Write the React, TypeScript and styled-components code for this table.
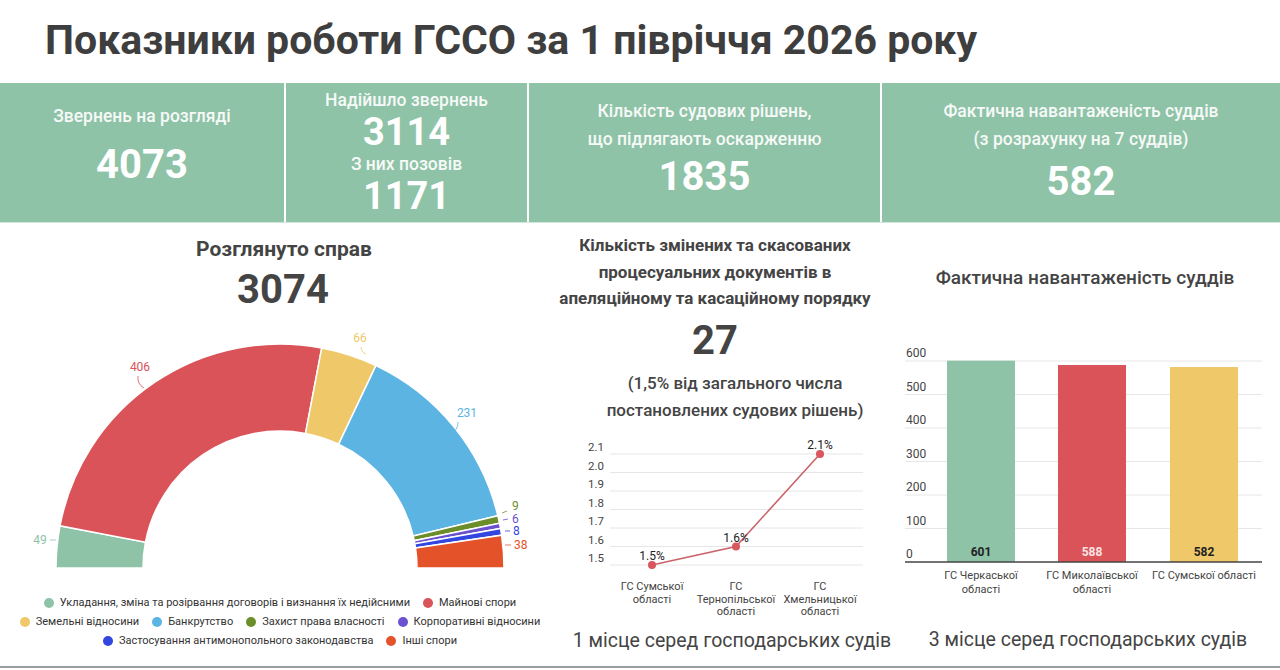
import React from 'react';
import styled, { createGlobalStyle } from 'styled-components';

const GlobalStyle = createGlobalStyle`
  html, body {
    margin: 0;
    padding: 0;
    background: #fff;
  }
  body {
    font-family: Roboto, 'Noto Sans', 'Liberation Sans', sans-serif;
    color: #444;
  }
`;

const Page = styled.div`
  width: 1280px;
  height: 670px;
  overflow: hidden;
  display: flex;
  flex-direction: column;
  background: #fff;
  box-sizing: border-box;
  padding-bottom: 2px;
`;

const Header = styled.header`
  height: 83px;
  display: flex;
  align-items: center;
  padding: 0 0 4px 45px;
  box-sizing: border-box;
`;

const Title = styled.h1`
  margin: 0;
  font-size: 41px;
  font-weight: 700;
  color: #3e3e3e;
  white-space: nowrap;
`;

const StatBand = styled.section`
  display: grid;
  grid-template-columns: 284px 241px 351px 1fr;
  column-gap: 2px;
  height: 140px;
  border-bottom: 1px solid #d3e6db;
  box-sizing: border-box;
`;

const StatCell = styled.div<{ $pt: number; $gap: number }>`
  background: #8ec3a7;
  display: flex;
  flex-direction: column;
  align-items: center;
  padding-top: ${({ $pt }) => $pt}px;
  gap: ${({ $gap }) => $gap}px;
  box-sizing: border-box;
`;

const StatLabel = styled.div<{ $lh?: number }>`
  font-size: 17.5px;
  font-weight: 500;
  line-height: ${({ $lh }) => $lh ?? 22}px;
  text-align: center;
  color: #f6f9f7;
  white-space: nowrap;
`;

const StatValue = styled.div<{ $size?: number }>`
  font-size: ${({ $size }) => $size ?? 40}px;
  font-weight: 700;
  line-height: 38px;
  color: #fff;
`;

const Panels = styled.section`
  flex: 1;
  display: grid;
  grid-template-columns: 540px 350px 390px;
  border-bottom: 2px solid #9c9c9c;
`;

const Panel = styled.div<{ $pt: number }>`
  display: flex;
  flex-direction: column;
  align-items: center;
  padding-top: ${({ $pt }) => $pt}px;
  box-sizing: border-box;
`;

const PanelTitle = styled.div<{ $size?: number; $weight?: number; $lh?: number; $shift?: number }>`
  padding-left: ${({ $shift }) => $shift ?? 0}px;
  font-size: ${({ $size }) => $size ?? 17}px;
  font-weight: ${({ $weight }) => $weight ?? 700};
  line-height: ${({ $lh }) => $lh ?? 24}px;
  text-align: center;
  color: #444;
  white-space: nowrap;
`;

const BigNumber = styled.div<{ $mt: number; $shift?: number }>`
  margin-top: ${({ $mt }) => $mt}px;
  padding-left: ${({ $shift }) => $shift ?? 0}px;
  font-size: 40px;
  font-weight: 700;
  line-height: 44px;
  color: #444;
`;

const Note = styled.div`
  margin-top: 7px;
  padding-left: 40px;
  font-size: 17px;
  font-weight: 500;
  line-height: 27px;
  text-align: center;
  color: #444;
  white-space: nowrap;
`;

const ChartBox = styled.svg<{ $mt: number }>`
  display: block;
  margin-top: ${({ $mt }) => $mt}px;
  font-family: Roboto, 'Noto Sans', sans-serif;
`;

const Rank = styled.div<{ $mt: number; $shift: number }>`
  margin-top: ${({ $mt }) => $mt}px;
  padding-left: ${({ $shift }) => $shift}px;
  font-size: 19.5px;
  line-height: 26px;
  color: #444;
  white-space: nowrap;
`;

const Legend = styled.div`
  display: flex;
  flex-direction: column;
  align-items: center;
  margin-top: 3px;
  padding-left: 20px;
`;

const LegendRow = styled.div`
  display: flex;
  align-items: center;
  gap: 13px;
  height: 19px;
`;

const LegendItem = styled.span`
  display: flex;
  align-items: center;
  gap: 6px;
  font-size: 11px;
  color: #333;
  white-space: nowrap;
`;

const Dot = styled.i<{ $color: string }>`
  width: 10px;
  height: 10px;
  border-radius: 50%;
  background: ${({ $color }) => $color};
`;

const C = {
  green: '#8ec3a7',
  red: '#da5359',
  yellow: '#eec869',
  blue: '#5cb4e2',
  olive: '#6b8e2b',
  purple: '#6a51d0',
  royal: '#3346e0',
  orange: '#e4522a',
};

const slices = [
  { v: 49, c: C.green },
  { v: 406, c: C.red },
  { v: 66, c: C.yellow },
  { v: 231, c: C.blue },
  { v: 9, c: C.olive },
  { v: 6, c: C.purple },
  { v: 8, c: C.royal },
  { v: 38, c: C.orange },
];

const legendRows = [
  [
    { t: 'Укладання, зміна та розірвання договорів і визнання їх недійсними', c: C.green },
    { t: 'Майнові спори', c: C.red },
  ],
  [
    { t: 'Земельні відносини', c: C.yellow },
    { t: 'Банкрутство', c: C.blue },
    { t: 'Захист права власності', c: C.olive },
    { t: 'Корпоративні відносини', c: C.purple },
  ],
  [
    { t: 'Застосування антимонопольного законодавства', c: C.royal },
    { t: 'Інші спори', c: C.orange },
  ],
];

const polar = (cx: number, cy: number, r: number, deg: number) => {
  const a = (deg * Math.PI) / 180;
  return [cx + r * Math.cos(a), cy - r * Math.sin(a)];
};

const HalfDonut = () => {
  const cx = 280;
  const cy = 256;
  const R = 224;
  const r = 137;
  const total = slices.reduce((s, x) => s + x.v, 0);
  let start = 180;

  const paths = slices.map((s, i) => {
    const end = start - (s.v / total) * 180;
    const [x1, y1] = polar(cx, cy, R, start);
    const [x2, y2] = polar(cx, cy, R, end);
    const [x3, y3] = polar(cx, cy, r, end);
    const [x4, y4] = polar(cx, cy, r, start);
    const d = `M${x1} ${y1} A${R} ${R} 0 0 1 ${x2} ${y2} L${x3} ${y3} A${r} ${r} 0 0 0 ${x4} ${y4} Z`;
    start = end;
    return <path key={i} d={d} fill={s.c} stroke="#fff" strokeWidth={1.5} />;
  });

  const labels = [
    { t: '49', x: 40, y: 232, c: C.green, line: 'M50 228 L56 228', a: 'middle' },
    { t: '406', x: 140, y: 59, c: C.red, line: 'M138 64 Q137 72 144 76', a: 'middle' },
    { t: '66', x: 360, y: 30, c: C.yellow, line: 'M361 35 Q361 40 366 42', a: 'middle' },
    { t: '231', x: 467, y: 105, c: C.blue, line: 'M458 110 Q458 118 451 122', a: 'middle' },
    { t: '9', x: 512, y: 198, c: C.olive, line: 'M502 201 L507 199', a: 'start' },
    { t: '6', x: 512, y: 211, c: C.purple, line: 'M503 208 L508 207', a: 'start' },
    { t: '8', x: 513, y: 223, c: C.royal, line: 'M505 219 L510 219', a: 'start' },
    { t: '38', x: 514, y: 237, c: C.orange, line: 'M505 233 L511 233', a: 'start' },
  ];

  return (
    <ChartBox $mt={0} width={540} height={278} viewBox="0 0 540 278">
      {paths}
      {labels.map((l) => (
        <g key={l.t}>
          <path d={l.line} stroke={l.c} strokeWidth={1} fill="none" opacity={0.8} />
          <text
            x={l.x}
            y={l.y}
            fontSize={12}
            fill={l.c}
            textAnchor={l.a as 'middle' | 'start'}
          >
            {l.t}
          </text>
        </g>
      ))}
    </ChartBox>
  );
};

const LineChart = () => {
  const ticks = [2.1, 2.0, 1.9, 1.8, 1.7, 1.6, 1.5];
  const yOf = (v: number) => 24 + ((2.1 - v) / 0.6) * 111;
  const pts = [
    { x: 112, v: 1.5, lbl: '1.5%', cat: ['ГС Сумської', 'області'] },
    { x: 196, v: 1.6, lbl: '1.6%', cat: ['ГС', 'Тернопільської', 'області'] },
    { x: 280, v: 2.1, lbl: '2.1%', cat: ['ГС', 'Хмельницької', 'області'] },
  ];
  return (
    <ChartBox $mt={6} width={350} height={190} viewBox="0 0 350 190">
      {ticks.map((t) => (
        <g key={t}>
          <line x1={70} x2={323} y1={yOf(t)} y2={yOf(t)} stroke="#e6e6e6" strokeWidth={1} />
          <text x={48} y={yOf(t) - 3} fontSize={11.5} fill="#444">
            {t.toFixed(1)}
          </text>
        </g>
      ))}
      <polyline
        points={pts.map((p) => `${p.x},${yOf(p.v)}`).join(' ')}
        fill="none"
        stroke="#c9646a"
        strokeWidth={1.6}
      />
      {pts.map((p) => (
        <g key={p.lbl}>
          <circle cx={p.x} cy={yOf(p.v)} r={4} fill="#d9575e" />
          <text x={p.x} y={yOf(p.v) - 5} fontSize={12} fill="#222" textAnchor="middle">
            {p.lbl}
          </text>
          {p.cat.map((c, i) => (
            <text key={c} x={p.x} y={160 + i * 12.5} fontSize={11} fill="#444" textAnchor="middle">
              {c}
            </text>
          ))}
        </g>
      ))}
    </ChartBox>
  );
};

const BarChart = () => {
  const ticks = [600, 500, 400, 300, 200, 100, 0];
  const yOf = (v: number) => 233 - (v / 600) * 201;
  const bars = [
    { x: 57, v: 601, c: C.green, tc: '#222', cat: ['ГС Черкаської', 'області'] },
    { x: 168, v: 588, c: C.red, tc: '#fbe3e4', cat: ['ГС Миколаївської', 'області'] },
    { x: 280, v: 582, c: C.yellow, tc: '#222', cat: ['ГС Сумської області'] },
  ];
  return (
    <ChartBox $mt={38} width={390} height={270} viewBox="0 0 390 270">
      {ticks.map((t) => (
        <g key={t}>
          {t !== 0 && <line x1={15} x2={372} y1={yOf(t)} y2={yOf(t)} stroke="#e6e6e6" strokeWidth={1} />}
          <text x={16} y={yOf(t) - 4} fontSize={12} fill="#444">
            {t}
          </text>
        </g>
      ))}
      {bars.map((b) => (
        <g key={b.v}>
          <rect x={b.x} y={yOf(b.v)} width={68} height={233 - yOf(b.v)} fill={b.c} />
          <text x={b.x + 34} y={227} fontSize={12} fontWeight={700} fill={b.tc} textAnchor="middle">
            {b.v}
          </text>
          {b.cat.map((c, i) => (
            <text key={c} x={b.x + 34} y={250 + i * 13.5} fontSize={11} fill="#444" textAnchor="middle">
              {c}
            </text>
          ))}
        </g>
      ))}
      <line x1={15} x2={372} y1={233} y2={233} stroke="#444" strokeWidth={1.5} />
    </ChartBox>
  );
};

export default function App() {
  return (
    <Page>
      <GlobalStyle />
      <Header>
        <Title>Показники роботи ГССО за 1 півріччя 2026 року</Title>
      </Header>

      <StatBand>
        <StatCell $pt={22} $gap={19}>
          <StatLabel>Звернень на розгляді</StatLabel>
          <StatValue>4073</StatValue>
        </StatCell>
        <StatCell $pt={6} $gap={2}>
          <StatLabel>Надійшло звернень</StatLabel>
          <StatValue $size={38}>3114</StatValue>
          <StatLabel>З них позовів</StatLabel>
          <StatValue $size={38}>1171</StatValue>
        </StatCell>
        <StatCell $pt={14} $gap={5}>
          <StatLabel $lh={28}>
            Кількість судових рішень,
            <br />
            що підлягають оскарженню
          </StatLabel>
          <StatValue>1835</StatValue>
        </StatCell>
        <StatCell $pt={14} $gap={10}>
          <StatLabel $lh={28}>
            Фактична навантаженість суддів
            <br />
            (з розрахунку на 7 суддів)
          </StatLabel>
          <StatValue>582</StatValue>
        </StatCell>
      </StatBand>

      <Panels>
        <Panel $pt={12}>
          <PanelTitle $size={21} $lh={28} $shift={28}>Розглянуто справ</PanelTitle>
          <BigNumber $mt={5} $shift={26}>3074</BigNumber>
          <HalfDonut />
          <Legend>
            {legendRows.map((row, i) => (
              <LegendRow key={i}>
                {row.map((it) => (
                  <LegendItem key={it.t}>
                    <Dot $color={it.c} />
                    {it.t}
                  </LegendItem>
                ))}
              </LegendRow>
            ))}
          </Legend>
        </Panel>

        <Panel $pt={9}>
          <PanelTitle $lh={26.5}>
            Кількість змінених та скасованих
            <br />
            процесуальних документів в
            <br />
            апеляційному та касаційному порядку
          </PanelTitle>
          <BigNumber $mt={7}>27</BigNumber>
          <Note>
            (1,5% від загального числа
            <br />
            постановлених судових рішень)
          </Note>
          <LineChart />
          <Rank $mt={8} $shift={34}>1 місце серед господарських судів</Rank>
        </Panel>

        <Panel $pt={42}>
          <PanelTitle $size={19} $weight={500} $lh={26}>
            Фактична навантаженість суддів
          </PanelTitle>
          <BarChart />
          <Rank $mt={28} $shift={6}>3 місце серед господарських судів</Rank>
        </Panel>
      </Panels>
    </Page>
  );
}
